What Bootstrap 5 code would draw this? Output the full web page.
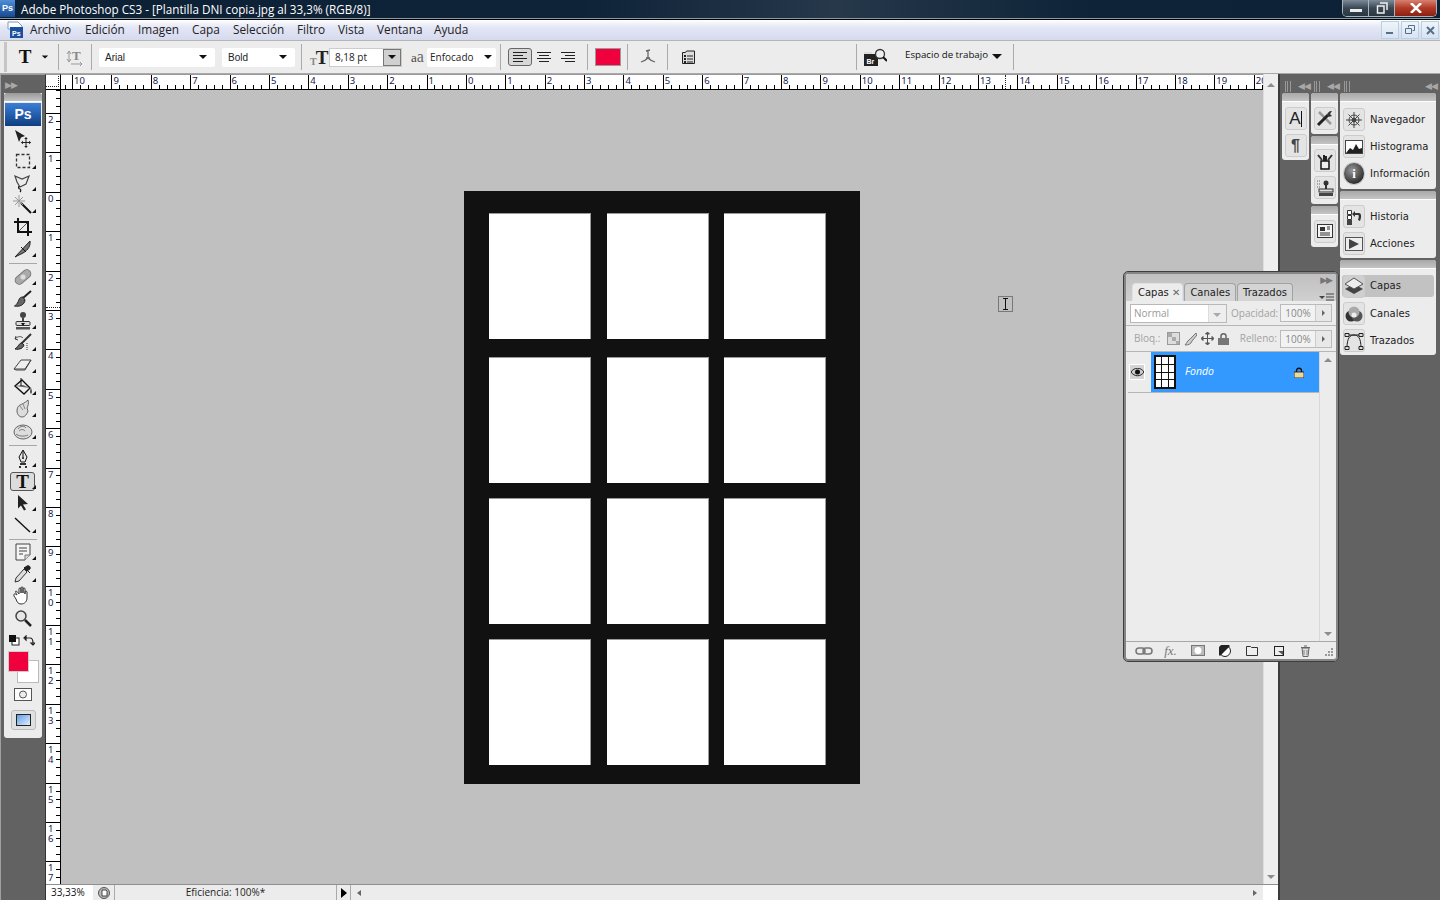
<!DOCTYPE html>
<html lang="es">
<head>
<meta charset="UTF-8">
<title>Adobe Photoshop CS3</title>
<link rel="stylesheet" href="https://cdn.jsdelivr.net/npm/bootstrap@5.3.0/dist/css/bootstrap.min.css">
<style>
html,body{height:900px;overflow:hidden}
body{width:1440px;background:#626262;font-family:"Open Sans","Noto Sans",sans-serif;font-size:12px;color:#222}
svg{display:block;flex:none}

/* title + menu */
.ps-title{height:19px;flex:none;color:#fff;font-size:11.7px;line-height:19px;border-bottom:1px solid #8b99a5;background:linear-gradient(to right,#0c2036,#0e2238 40%,#26384a 58%,#0e2338 76%,#0c2036)}
.ps-logo-sm{width:15px;height:17px;background:linear-gradient(#4f8ed8,#174a94);font:700 9px/17px "Liberation Sans",sans-serif;text-align:center;margin-right:6px}
.win-btns{height:17px;border:1px solid #aab4bd;border-top:0;border-radius:0 0 5px 5px;margin-right:3px;overflow:hidden}
.win-btn{width:26px;height:16px;border-right:1px solid #aab4bd;background:linear-gradient(#7d8b98,#3a4754 50%,#2a3641)}
.win-close{width:41px;border:0;background:linear-gradient(#d88070,#b03a26 50%,#8c2012)}
.ps-menu{height:22px;flex:none;border-top:1px solid #000;border-bottom:1px solid #b4b4b4;background:linear-gradient(#fff,#e4e7f5 35%,#d6daee)}
.ps-menu .nav-link{padding:0;color:#222;font-size:11.8px;line-height:19px;position:absolute;top:0}
.mdi-row{gap:2px;margin-right:1px}
.mdi-btn{width:18px;height:18px;border:1px solid #b8d0e2;background:linear-gradient(#eef4fa,#d8e4f2)}

/* options */
.ps-opts{height:33px;flex:none;background:#ececec;border-bottom:1px solid #a8a8a8;font-size:10px}
.opt-grip{width:3px;height:30px;background:#c6c6c6;margin:0 5px 0 4px}
.opt-sep{width:1px;height:26px;background:#aaa;flex:none}
.opt-select{height:19px;background:#fff;border-radius:2px;padding-left:6px;color:#222;font-family:"Liberation Sans",sans-serif;flex:none}
.tri-down{width:0;height:0;border:4px solid transparent;border-top:4px solid #111;border-bottom:0;flex:none}

/* work area */
.ps-work{flex:1 1 auto;min-height:0;position:relative}
.tool-col{width:46px;flex:none;padding:18px 0 0 3px;background:#626262;border-top:1px solid #9a9a9a;border-right:1px solid #333;border-left:1px solid #a0a0a0;position:relative}
.arrows{color:#a8a8a8;font-size:9px;letter-spacing:-1px;line-height:9px;position:absolute;font-family:"DejaVu Sans",sans-serif}
.tool-box{width:38px;height:645px;background:#ececec;border-radius:0 0 3px 3px}
.box-head{height:9px;background:linear-gradient(#999,#c2c2c2);border-bottom:1px solid #fff;border-radius:3px 3px 0 0}
.ps-big{margin:1px 1px 2px;height:23px;color:#fff;text-align:center;font:700 14px/23px "Liberation Sans",sans-serif;background:linear-gradient(#3b7fd8,#0f3d80)}
.tool-i{height:22px;position:relative;padding-right:1px}
.tool-i.flyout::after{content:"";position:absolute;right:6px;bottom:3px;border:2px solid #111;border-left-color:transparent;border-top-color:transparent}
.tool-on .tool-inner{width:25px;height:19px;border:1px solid #555;border-radius:3px;background:#dcdcdc}
.serif-t{font:700 19px/18px "Liberation Serif",serif;color:#111;text-align:center}
.tool-line{height:1px;background:#a8a8a8;margin:3px 5px 2px}
.swatches{height:37px;position:relative}
.sw-bg{position:absolute;left:13px;top:9px;width:22px;height:23px;background:#fff;border:1px solid #bbb}
.sw-fg{position:absolute;left:4px;top:0;width:21px;height:21px;background:#f0003c;border:1px solid #ccc}

.ps-center{flex:1 1 auto;min-width:0}
.hruler{height:16px;background:#fff;border-top:1px solid #9a9a9a;border-bottom:1px solid #000;overflow:hidden;position:relative;flex:1 1 auto;min-width:0;display:flex}
.ruler-corner{width:15px;height:16px;flex:none;background:#fff;border-top:1px solid #9a9a9a;border-bottom:1px solid #000;border-right:1px solid #000;position:relative}
.r-x{flex:none;width:39.4px;height:100%;border-left:1px solid #000;font:9.5px/12px "Noto Sans",sans-serif;color:#14204e;padding-left:1px;background:repeating-linear-gradient(to right,#000 0 1px,transparent 1px 7.88px) 6.9px 100%/100% 4px no-repeat}
.vruler{width:15px;flex:none;background:#fff;border-right:1px solid #000;overflow:hidden;position:relative}
.r-y{height:39.4px;border-top:1px solid #000;font:9.5px/10px "Noto Sans",sans-serif;color:#14204e;padding:1px 0 0 2px;background:repeating-linear-gradient(to bottom,#000 0 1px,transparent 1px 7.88px) 100% 6.9px/4px 100% no-repeat}
.ps-canvas{flex:1 1 auto;min-width:0;background:#c0c0c0}
.doc{width:396px;height:593px;background:#111;padding:22px 0 0 25px;display:grid;grid-template-columns:102px 102px 102px;column-gap:15.5px;row-gap:15px;align-content:start}
.doc-cell{background:#fff;box-shadow:inset -1px 1px 0 #9a9a9a}
.doc-first{margin-bottom:3px}
.vscroll{width:15px;flex:none;background:#eee;border-left:1px solid #ddd;color:#888}
.scroll-up{width:0;height:0;border:4px solid transparent;border-bottom:4px solid #8c8c8c;border-top:0}
.scroll-down{width:0;height:0;border:4px solid transparent;border-top:4px solid #8c8c8c;border-bottom:0}
.ps-status{height:16px;flex:none;background:#ececec;border-top:1px solid #8f8f8f;font-size:10px;line-height:15px}
.st-zoom{width:47px;background:#fff;padding-left:5px;color:#111}
.st-sep{border-right:1px solid #aaa}
.st-end{width:15px;background:#fff}

/* dock */
.ps-dock{width:162px;flex:none;background:#626262;border-left:2px solid #3c3c3c;padding:0 0 0 2px;position:relative}
.dock-strip{height:19px;flex:none}
.grip{width:6px;height:11px;border-left:1px solid #999;border-right:1px solid #999;position:absolute;top:7px}
.grip::after{content:"";display:block;margin-left:1px;width:1px;height:11px;background:#999}
.dock-cols{column-gap:2px}
.dock-col{width:27px}
.dock-col-wide{width:96px}
.dock-grp{background:#ececec;border-radius:3px;margin-bottom:2px}
.dock-head{height:9px;background:linear-gradient(#a8a8a8,#c4c4c4);border-bottom:1px solid #fff;border-radius:3px 3px 0 0}
.icon-cell{height:27px}
.icon-tall{height:32px}
.icon-btn{width:22px;height:23px;border:1px solid #ccc;border-radius:3px;background:#e4e4e4;color:#222;flex:none}
.dock-row{height:27px;margin:0 2px;padding-left:1px;font:10px/1 "DejaVu Sans",sans-serif;color:#222;letter-spacing:.05px}
.dock-row .icon-btn{margin-right:5px}
.dock-on{background:#c2c2c2;border-radius:3px;height:22px;margin-top:2px;margin-bottom:3px}

/* floating layers window */
.layers-win{position:absolute;left:1123px;top:197px;width:216px;height:391px;background:#ececec;border:1px solid #3e3e3e;box-shadow:inset 0 0 0 2px #858585;border-radius:5px;padding:2px;font-size:10px}
.win-head{height:27px;flex:none;background:linear-gradient(#c0c0c0,#d0d0d0);position:relative;padding:9px 0 0 6px;border-radius:3px 3px 0 0}
.win-head .arrows{color:#777}
.win-head .nav-tabs{border:0;gap:1px;flex-wrap:nowrap}
.win-head .nav-link{height:18px;padding:0 5px;font:10px/18px "DejaVu Sans",sans-serif;color:#222;background:#d4d4d4;border:1px solid #a2a2a2;border-bottom:0;border-radius:4px 4px 0 0;white-space:nowrap}
.win-head .nav-link.active{background:#ececec;color:#222;padding-right:2px}
.win-row{height:25px;flex:none;border-bottom:1px solid #b6b6b6;color:#a2a2a2;padding:0 4px}
.win-row-b{height:26px}
.win-input{height:19px;background:#fff;border:1px solid #b8b8b8;color:#999;padding-left:3px}
.win-field{width:52px;height:18px;border:1px solid #bbb;background:#e8e8e8}
.win-field span{width:35px;text-align:center;background:#f2f2f2;border-right:1px solid #ccc;line-height:16px;color:#888}
.mini-arrow{width:0;height:0;border:3px solid transparent;border-left:3px solid #666;border-right:0;margin:auto}
.layer-list{flex:1 1 auto;min-height:0;border-bottom:1px solid #a8a8a8}
.layer-col{width:194px;padding-left:2px;border-right:1px solid #d8d8d8}
.layer-item{height:41px;border-bottom:1px solid #b6b6b6}
.eye-cell{width:23px;flex:none}
.eye-box{width:16px;height:16px;border:1px solid #fff;background:#d4d4d4;margin-left:1px}
.layer-on{background:#3399ff;flex:1 1 auto;color:#fff;font-style:italic;font-size:10.5px;padding-left:3px}
.layer-thumb{width:22px;height:34px;background:#111;padding:2px 2px;display:grid;grid-template-columns:repeat(3,1fr);gap:1px;margin-right:9px}
.layer-thumb i{background:#fff}
.layer-scroll{width:16px;flex:none;padding:6px 0 5px}
.win-foot{height:17px;flex:none;padding-left:4px}
.foot-i{width:27px}
.fx-t{font:italic 13px/1 "Liberation Serif",serif;color:#777}
.txt-cursor{position:absolute;left:998px;top:222px}
</style>
</head>
<body class="d-flex flex-column">

<div class="ps-title d-flex align-items-start">
  <div class="ps-logo-sm">Ps</div>
  <div class="flex-grow-1">Adobe Photoshop CS3 - [Plantilla DNI copia.jpg al 33,3% (RGB/8)]</div>
  <div class="win-btns d-flex">
    <div class="win-btn d-flex align-items-end justify-content-center pb-1"><svg width="12" height="3"><rect width="12" height="3" fill="#eee"/></svg></div>
    <div class="win-btn d-flex align-items-center justify-content-center"><svg width="12" height="12" fill="none" stroke="#eee" stroke-width="1.5"><path d="M4 1h7v7M1.500 4h6.500v7h-6.500z"/></svg></div>
    <div class="win-btn win-close d-flex align-items-center justify-content-center"><svg width="12" height="10" stroke="#fff" stroke-width="2.500"><path d="M1 0l10 10M11 0L1 10"/></svg></div>
  </div>
</div>

<div class="ps-menu d-flex position-relative">
  <svg class="position-absolute" style="left:7px;top:1px" width="17" height="18"><path d="M1 1h10l4 4v3H1z" fill="#fff" stroke="#7d9cc4"/><rect x="3" y="6" width="13" height="11" fill="#1c4f9c"/><text x="5" y="15" font-size="7" font-weight="700" fill="#fff" font-family="Liberation Sans">Ps</text></svg>
  <nav class="nav">
    <a class="nav-link" style="left:30px">Archivo</a>
    <a class="nav-link" style="left:85px">Edición</a>
    <a class="nav-link" style="left:138px">Imagen</a>
    <a class="nav-link" style="left:192px">Capa</a>
    <a class="nav-link" style="left:233px">Selección</a>
    <a class="nav-link" style="left:297px">Filtro</a>
    <a class="nav-link" style="left:338px">Vista</a>
    <a class="nav-link" style="left:377px">Ventana</a>
    <a class="nav-link" style="left:434px">Ayuda</a>
  </nav>
  <div class="ms-auto d-flex mdi-row align-items-center">
    <div class="mdi-btn d-flex align-items-center justify-content-center"><svg width="8" height="8"><rect y="6" width="7" height="2" fill="#56708c"/></svg></div>
    <div class="mdi-btn d-flex align-items-center justify-content-center"><svg width="10" height="10" fill="none" stroke="#56708c"><path d="M3.500 2.500V.5h6v5h-2M.5 3.500h6v5h-6z"/></svg></div>
    <div class="mdi-btn d-flex align-items-center justify-content-center"><svg width="9" height="9" stroke="#56708c" stroke-width="2"><path d="M1 1l7 7M8 1L1 8"/></svg></div>
  </div>
</div>

<div class="ps-opts d-flex align-items-center">
  <div class="opt-grip"></div>
  <div class="serif-t" style="width:26px">T</div>
  <div class="tri-down" style="margin-left:3px;transform:scale(.8)"></div>
  <div class="opt-sep" style="margin-left:9px"></div>
  <svg style="margin-left:7px" width="18" height="18"><path d="M3 3v11M1 6l2-3 2 3M1 11l2 3 2-3M5 16h11M14 14l2 2-2 2" fill="none" stroke="#999"/><text x="6" y="12" font-size="13" font-weight="700" fill="#888" font-family="Liberation Serif">T</text></svg>
  <div class="opt-sep" style="margin-left:7px"></div>
  <div class="opt-select d-flex align-items-center" style="width:116px;margin-left:7px">Arial<span class="tri-down ms-auto me-2"></span></div>
  <div class="opt-select d-flex align-items-center" style="width:73px;margin-left:7px">Bold<span class="tri-down ms-auto me-2"></span></div>
  <div class="opt-sep" style="margin-left:6px"></div>
  <div class="d-flex align-items-end" style="margin-left:8px;width:18px;font:700 10px/1 'Liberation Serif',serif;color:#888">T<span style="font-size:19px;line-height:19px;color:#222;margin-left:-1px">T</span></div>
  <div class="d-flex align-items-center flex-none" style="width:73px;height:19px;margin-left:1px;background:#fff;border:1px solid #ccc;padding-left:5px">8,18 pt<span class="ms-auto d-flex align-items-center justify-content-center" style="width:18px;height:17px;background:#d0d0d0;border:1px solid #777"><i class="tri-down"></i></span></div>
  <div style="margin-left:9px;width:16px;font:13px/1 'Liberation Serif',serif;color:#444">a<span style="font-size:16px;color:#666">a</span></div>
  <div class="opt-select d-flex align-items-center" style="width:69px;padding-left:3px;font-family:'Open Sans',sans-serif">Enfocado<span class="tri-down ms-auto me-1"></span></div>
  <div class="opt-sep" style="margin-left:4px"></div>
  <div class="d-flex align-items-center justify-content-center" style="width:24px;height:18px;margin-left:7px;background:#d8d8d8;border:1px solid #666;border-radius:3px"><svg width="16" height="13" stroke="#222"><path d="M1 1.500h14M1 4.500h10M1 7.500h14M1 10.500h10"/></svg></div>
  <svg style="margin-left:4px" width="16" height="13" stroke="#222"><path d="M1 1.500h14M3 4.500h10M1 7.500h14M3 10.500h10"/></svg>
  <svg style="margin-left:8px" width="16" height="13" stroke="#222"><path d="M1 1.500h14M5 4.500h10M1 7.500h14M5 10.500h10"/></svg>
  <div class="opt-sep" style="margin-left:11px"></div>
  <div style="width:26px;height:18px;margin-left:7px;background:#f0003c;border:1px solid #999"></div>
  <div class="opt-sep" style="margin-left:6px"></div>
  <svg style="margin-left:12px" width="16" height="18" fill="none" stroke="#666" stroke-width="1.300"><path d="M6 3l4-1M8 2v8M6 10h4M8 10c-2 2-4 3-7 4M8 10c2 2 4 3 7 4"/></svg>
  <div class="opt-sep" style="margin-left:11px"></div>
  <svg style="margin-left:13px" width="15" height="15"><path d="M1.500 2.500h3l1-1.500h8v12.500h-12z" fill="#ddd" stroke="#222"/><path d="M3 5h2v2H3zM3 8h2v2H3zM3 11h2v2H3z" fill="#222"/><path d="M6 6h6M6 9h6M6 12h6" stroke="#222"/></svg>
  <div class="opt-sep" style="margin-left:160px"></div>
  <svg style="margin-left:6px" width="24" height="18"><path d="M1 5h5l1 1h8v12H1z" fill="#222"/><rect x="1" y="4" width="8" height="2" fill="#ddd"/><circle cx="17" cy="6" r="4.500" fill="#eee" stroke="#333" stroke-width="1.300"/><path d="M20 9l4 4" stroke="#111" stroke-width="2"/><text x="3.500" y="15.500" font-size="7" font-weight="700" fill="#fff" font-family="Liberation Sans">Br</text></svg>
  <div style="margin-left:18px;margin-top:-3px;color:#111;font-size:9.7px" class="text-nowrap">Espacio de trabajo</div>
  <div class="tri-down" style="margin:-2px 0 0 4px;border-width:5px;border-bottom:0"></div>
  <div class="opt-sep" style="margin-left:11px"></div>
</div>

<div class="ps-work d-flex">
  <div class="tool-col">
    <div class="arrows" style="left:4px;top:6px">▶▶</div>
    <div class="tool-box">
      <div class="box-head"></div>
      <div class="ps-big">Ps</div>
      <div class="tool-i d-flex align-items-center justify-content-center"><svg width="20" height="20"><path d="M2 1l10 6-4 1.500-2 4.500z" fill="#222"/><path d="M13 9v9M8.500 13.500h9" stroke="#222" fill="none"/><path d="M13 8l-1.800 2h3.600zM13 19l-1.800-2h3.600zM8 13.500l2-1.800v3.600zM18 13.500l-2-1.800v3.600z" fill="#222"/></svg></div>
      <div class="tool-i flyout d-flex align-items-center justify-content-center"><svg width="20" height="20"><rect x="3.500" y="3.500" width="13" height="13" fill="none" stroke="#333" stroke-width="1.300" stroke-dasharray="3 2"/></svg></div>
      <div class="tool-i flyout d-flex align-items-center justify-content-center"><svg width="20" height="20" fill="none" stroke="#444" stroke-width="1.200"><path d="M2 3l7 3 7-3-3 8-6 3-3-5z"/><path d="M6 13c-1 2 0 3 1 3s1 2 0 3" stroke="#111"/></svg></div>
      <div class="tool-i d-flex align-items-center justify-content-center flyout"><svg width="20" height="20"><path d="M8 8l10 10" stroke="#111" stroke-width="2"/><path d="M6 0v12M0 6h12M2 2l8 8M10 2l-8 8" stroke="#999"/></svg></div>
      <div class="tool-i d-flex align-items-center justify-content-center"><svg width="20" height="20" fill="none"><path d="M5 1v14h14M1 5h14v14" stroke="#111" stroke-width="2"/><path d="M6 14l8-8" stroke="#555"/></svg></div>
      <div class="tool-i flyout d-flex align-items-center justify-content-center"><svg width="20" height="20"><path d="M2 18L17 2c1 6-4 11-9 13z" fill="#777" stroke="#222"/><path d="M8 8l5 5" stroke="#111"/></svg></div>
      <div class="tool-line"></div>
      <div class="tool-i flyout d-flex align-items-center justify-content-center"><svg width="20" height="20"><rect x="1" y="6" width="18" height="8" rx="4" fill="#aaa" stroke="#777" transform="rotate(-40 10 10)"/><circle cx="10" cy="10" r="2.500" fill="#ddd"/></svg></div>
      <div class="tool-i flyout d-flex align-items-center justify-content-center"><svg width="20" height="20"><path d="M18 2l-8 7" stroke="#222" stroke-width="2"/><path d="M10 8c-4 0-4 3-5 5-.5 1.500-2 3-3.500 4 5 1 10-1 10.500-6z" fill="#666" stroke="#222"/></svg></div>
      <div class="tool-i flyout d-flex align-items-center justify-content-center"><svg width="20" height="20"><circle cx="10" cy="4" r="3" fill="#444"/><path d="M9 7h2v4H9z" fill="#444"/><rect x="3" y="10.500" width="14" height="4" rx="1" fill="#ddd" stroke="#333"/><path d="M3 16h14v2.500H3z" fill="#555"/><path d="M8 12h4l-2 3z" fill="#111"/></svg></div>
      <div class="tool-i flyout d-flex align-items-center justify-content-center"><svg width="20" height="20" fill="none"><path d="M18 1L8 11" stroke="#333" stroke-width="2"/><path d="M9 10c-3 0-3 3-7 6 5 1 8-1 9-4z" fill="#666" stroke="#222"/><path d="M2 6c3-3 6-3 8-1M2 6l1-3M2 6l3 1" stroke="#444"/><path d="M14 10v8" stroke="#333" stroke-dasharray="1 1"/></svg></div>
      <div class="tool-i flyout d-flex align-items-center justify-content-center"><svg width="20" height="20"><path d="M1 14l7-9h10l-6 10H3z" fill="#eee" stroke="#444"/><path d="M1 14h11l6-9" fill="none" stroke="#444"/></svg></div>
      <div class="tool-i flyout d-flex align-items-center justify-content-center"><svg width="20" height="20"><path d="M9 3l8 8-6 6-9-8z" fill="#eee" stroke="#111" stroke-width="1.400"/><path d="M2 9l8-1 7 3" fill="#666"/><path d="M8 1v8" stroke="#111"/><path d="M18 11c1 2 1 5 0 6-1-1-1-4 0-6z" fill="#222"/></svg></div>
      <div class="tool-i flyout d-flex align-items-center justify-content-center"><svg width="20" height="20"><path d="M15 1c-3 3-6 4-8 5-2 1-3 3-3 6 0 3 2 6 5 6s5-3 6-6l-1-3c1-2 2-5 1-8z" fill="#ddd" stroke="#666"/><path d="M7 7l3 4M10 5l2 5" stroke="#888"/></svg></div>
      <div class="tool-i flyout d-flex align-items-center justify-content-center"><svg width="20" height="20"><ellipse cx="10" cy="11" rx="9" ry="7" fill="#ddd" stroke="#666"/><path d="M3 13c2 2 8 3 12 1M5 8c2-3 6-4 8-1M6 10c2-2 4-2 6 0" fill="none" stroke="#777"/></svg></div>
      <div class="tool-line"></div>
      <div class="tool-i flyout d-flex align-items-center justify-content-center"><svg width="20" height="20"><path d="M10 1l4 7-2 5H8L6 8z" fill="#e8e8e8" stroke="#111"/><path d="M10 2v6" stroke="#111"/><circle cx="10" cy="9" r="1" fill="#111"/><path d="M7 14h6v2H7zM6 17h2v2H6zM12 17h2v2h-2z" fill="#333"/></svg></div>
      <div class="tool-i tool-on flyout d-flex align-items-center justify-content-center"><div class="tool-inner serif-t">T</div></div>
      <div class="tool-i flyout d-flex align-items-center justify-content-center"><svg width="20" height="20"><path d="M5 2l10 9-5 .5 3 5-2 1-3-5-3 3z" fill="#222"/></svg></div>
      <div class="tool-i flyout d-flex align-items-center justify-content-center"><svg width="20" height="20"><path d="M2 3l15 14" stroke="#111" stroke-width="1.400"/></svg></div>
      <div class="tool-line" style="margin-bottom:1px"></div>
      <div class="tool-i flyout d-flex align-items-center justify-content-center"><svg width="20" height="20"><path d="M3 2h14v11l-5 5H3z" fill="#f4f4f4" stroke="#444"/><path d="M12 18v-5h5" fill="#ddd" stroke="#777"/><path d="M6 6h8M6 9h8M6 12h4" stroke="#444"/></svg></div>
      <div class="tool-i flyout d-flex align-items-center justify-content-center"><svg width="20" height="20"><path d="M11 5l-8 9-1 4 4-1 8-9z" fill="#ddd" stroke="#333"/><path d="M11 3l6 6M14 2c2-1 4 1 3 3l-3 2-3-3z" fill="#222" stroke="#222"/></svg></div>
      <div class="tool-i d-flex align-items-center justify-content-center"><svg width="20" height="20"><path d="M4 9c-1-2-2-4-1-4s2 2 3 3V3c0-1.500 2-1.500 2 0v4-5c0-1.500 2-1.500 2 0v5-4c0-1.500 2-1.500 2 0v5-2c0-1.500 2-1 2 0v6c0 3-2 6-6 6-3 0-4-2-5-5l-2-3c-1-2 1-3 3-1z" fill="#fff" stroke="#333"/></svg></div>
      <div class="tool-i d-flex align-items-center justify-content-center"><svg width="20" height="20"><circle cx="8" cy="8" r="5" fill="#e6e6e6" stroke="#444" stroke-width="1.500"/><path d="M12 12l6 6" stroke="#222" stroke-width="2.500"/></svg></div>
      <div class="tool-i d-flex align-items-center justify-content-between" style="padding:0 7px 0 5px"><svg width="11" height="11"><rect x="3" y="3" width="7" height="7" fill="#fff" stroke="#222"/><rect x="0" y="0" width="7" height="7" fill="#111"/></svg><svg width="12" height="11" fill="none" stroke="#222" stroke-width="1.200"><path d="M2 3h5c2 0 3 1 3 5M1 3l2-2v4zM10 10l-2-2h4z"/></svg></div>
      <div class="swatches"><div class="sw-bg"></div><div class="sw-fg"></div></div>
      <div class="d-flex justify-content-center" style="margin-bottom:9px"><svg width="18" height="13"><rect x=".5" y=".5" width="17" height="12" fill="#fff" stroke="#555"/><circle cx="9" cy="6.500" r="3.500" fill="#eee" stroke="#555"/></svg></div>
      <div class="d-flex justify-content-center position-relative"><div class="d-flex align-items-center justify-content-center" style="width:25px;height:20px;border:1px solid #bbb;border-radius:3px;background:#e0e0e0"><svg width="15" height="12"><defs><linearGradient id="sm" x1="0" y1="0" x2="1" y2="1"><stop offset="0" stop-color="#5a9ae6"/><stop offset="1" stop-color="#e8f2fc"/></linearGradient></defs><rect x=".5" y=".5" width="14" height="11" fill="url(#sm)" stroke="#222"/></svg></div></div>
    </div>
  </div>

  <div class="ps-center d-flex flex-column">
    <div class="d-flex flex-grow-1" style="min-height:0">
      <div class="d-flex flex-column flex-grow-1" style="min-width:0">
        <div class="d-flex flex-none">
          <div class="ruler-corner"><svg class="position-absolute" style="left:0;top:0" width="14" height="14" stroke="#222" stroke-dasharray="1 1"><path d="M0 11.500h12M12.500 1v11"/></svg></div>
          <div class="hruler" id="hruler"></div>
        </div>
        <div class="d-flex flex-grow-1" style="min-height:0">
          <div class="vruler" id="vruler"></div>
          <div class="ps-canvas d-flex align-items-center justify-content-center">
            <div class="doc" id="doc"></div>
          </div>
        </div>
      </div>
      <div class="vscroll d-flex flex-column align-items-center justify-content-between" style="padding:9px 0 5px"><div class="scroll-up"></div><div class="scroll-down"></div></div>
    </div>
    <div class="ps-status d-flex">
      <div class="st-zoom">33,33%</div>
      <div class="d-flex align-items-center justify-content-center st-sep" style="width:22px"><svg width="12" height="12"><circle cx="6" cy="6" r="5.500" fill="#bbb" stroke="#555"/><path d="M4 3h4l1 1v5H4z" fill="#fff" stroke="#222" stroke-width=".8"/></svg></div>
      <div class="text-center st-sep" style="width:222px">Eficiencia: 100%*</div>
      <div class="d-flex align-items-center justify-content-center st-sep" style="width:14px"><svg width="6" height="10"><path d="M0 0l6 5-6 5z" fill="#000"/></svg></div>
      <div class="d-flex align-items-center justify-content-between flex-grow-1" style="padding:0 6px"><span class="mini-arrow" style="margin:0;transform:scaleX(-1);border-left-width:4px"></span><span class="mini-arrow" style="margin:0;border-left-width:4px"></span></div>
      <div class="st-end"></div>
    </div>
  </div>

  <div class="ps-dock d-flex flex-column">
    <div class="dock-strip">
      <div class="grip" style="left:5px"></div><div class="arrows" style="left:18px;top:8px">◀◀</div>
      <div class="grip" style="left:34px"></div><div class="arrows" style="left:47px;top:8px">◀◀</div>
      <div class="grip" style="left:64px"></div><div class="arrows" style="left:145px;top:8px">◀◀</div>
    </div>
    <div class="d-flex dock-cols">
      <div class="dock-col">
        <div class="dock-grp" style="padding:3px 0 1px">
          <div class="dock-head" style="margin-top:-3px;margin-bottom:3px"></div>
          <div class="icon-cell d-flex align-items-center justify-content-center"><div class="icon-btn d-flex align-items-center justify-content-center" style="font:17px/1 'Liberation Sans',sans-serif">A<svg width="1" height="16"><rect width="1" height="16" fill="#111"/></svg></div></div>
          <div class="icon-cell d-flex align-items-center justify-content-center"><div class="icon-btn d-flex align-items-center justify-content-center" style="font:700 16px/1 'Liberation Sans',sans-serif;color:#444">¶</div></div>
        </div>
      </div>
      <div class="dock-col">
        <div class="dock-grp">
          <div class="dock-head"></div>
          <div class="icon-cell icon-tall d-flex align-items-center justify-content-center"><div class="icon-btn d-flex align-items-center justify-content-center"><svg width="18" height="18"><path d="M3 3l12 12" stroke="#999" stroke-width="2.500"/><path d="M2 16L12 6" stroke="#222" stroke-width="3"/><path d="M11 7c0-3 2-5 5-5l-2 3 2 2c-2 1-4 1-5 0z" fill="#333"/></svg></div></div>
        </div>
        <div class="dock-grp" style="padding-bottom:3px">
          <div class="dock-head" style="margin-bottom:2px"></div>
          <div class="icon-cell d-flex align-items-center justify-content-center"><div class="icon-btn d-flex align-items-center justify-content-center"><svg width="18" height="18"><path d="M5 9h8v8H5z" fill="#eee" stroke="#111" stroke-width="1.500"/><path d="M8 9V3M10 9V4" stroke="#222" stroke-width="2"/><path d="M6 8L2 3M12 8l4-5" stroke="#333" stroke-width="2"/></svg></div></div>
          <div class="icon-cell d-flex align-items-center justify-content-center"><div class="icon-btn d-flex align-items-center justify-content-center"><svg width="18" height="18"><circle cx="10" cy="4" r="2.500" fill="#333"/><path d="M9 6h2v4H9z" fill="#333"/><rect x="3" y="10" width="14" height="3" fill="#ddd" stroke="#333"/><path d="M3 14h14v3H3z" fill="#444"/><path d="M1 2h4M1 5h4M1 8h4" stroke="#666" stroke-dasharray="1 1"/></svg></div></div>
        </div>
        <div class="dock-grp">
          <div class="dock-head"></div>
          <div class="icon-cell icon-tall d-flex align-items-center justify-content-center"><div class="icon-btn d-flex align-items-center justify-content-center"><svg width="16" height="14"><rect x=".5" y=".5" width="15" height="13" fill="#f4f4f4" stroke="#333"/><path d="M3 3h5v4H3z" fill="#333"/><path d="M3 9h10M3 11h10M10 3h3M10 5h3" stroke="#333"/></svg></div></div>
        </div>
      </div>
      <div class="dock-col-wide">
        <div class="dock-grp" style="padding-bottom:2px">
          <div class="dock-head" style="margin-bottom:4px"></div>
          <div class="dock-row d-flex align-items-center"><div class="icon-btn d-flex align-items-center justify-content-center"><svg width="18" height="18" fill="none" stroke="#444"><circle cx="9" cy="9" r="5"/><circle cx="9" cy="9" r="2" fill="#444"/><path d="M9 1v16M1 9h16M3.500 3.500l11 11M14.500 3.500l-11 11"/></svg></div>Navegador</div>
          <div class="dock-row d-flex align-items-center"><div class="icon-btn d-flex align-items-center justify-content-center"><svg width="18" height="14"><rect x=".5" y=".5" width="17" height="13" fill="#fff" stroke="#444"/><path d="M1 13l4-5 3 2 3-6 3 5 3-1v5z" fill="#222"/></svg></div>Histograma</div>
          <div class="dock-row d-flex align-items-center"><div class="icon-btn d-flex align-items-center justify-content-center" style="background:radial-gradient(circle at 40% 35%,#999 0,#333 70%);border-radius:50%;color:#fff;font:700 13px/1 'Liberation Serif',serif">i</div>Información</div>
        </div>
        <div class="dock-grp" style="padding-bottom:1px">
          <div class="dock-head" style="margin-bottom:3px"></div>
          <div class="dock-row d-flex align-items-center"><div class="icon-btn d-flex align-items-center justify-content-center"><svg width="16" height="16"><path d="M1.500 1.500h4v4h-4zM1.500 6.500h4v4h-4z" fill="#fff" stroke="#333"/><path d="M1 11h5v5H1z" fill="#444"/><path d="M8 4h4c2 0 3 3 1 8l-2-1c1-3 1-5 0-5H8v2L5 5l3-3z" fill="#333" transform="translate(1)"/></svg></div>Historia</div>
          <div class="dock-row d-flex align-items-center"><div class="icon-btn d-flex align-items-center justify-content-center"><svg width="18" height="14"><rect x=".5" y=".5" width="17" height="13" fill="#eee" stroke="#555"/><path d="M4 2l10 5-10 5z" fill="#444"/></svg></div>Acciones</div>
        </div>
        <div class="dock-grp" style="padding-bottom:1px">
          <div class="dock-head" style="margin-bottom:6px"></div>
          <div class="dock-row dock-on d-flex align-items-center"><div class="icon-btn d-flex align-items-center justify-content-center" style="background:#cfcfcf"><svg width="20" height="18"><path d="M10 7l9 5-9 5-9-5z" fill="#444"/><path d="M10 1l9 6-9 5-9-5z" fill="#eee" stroke="#555"/></svg></div>Capas</div>
          <div class="dock-row d-flex align-items-center"><div class="icon-btn d-flex align-items-center justify-content-center"><svg width="18" height="16"><circle cx="6" cy="10" r="5.500" fill="#333"/><circle cx="12" cy="10" r="5.500" fill="#555"/><circle cx="9" cy="6" r="5.500" fill="#aaa"/><circle cx="9" cy="9" r="2.500" fill="#eee"/></svg></div>Canales</div>
          <div class="dock-row d-flex align-items-center"><div class="icon-btn d-flex align-items-center justify-content-center"><svg width="20" height="18" fill="none" stroke="#222"><path d="M3 16C3 6 6 3 10 3s7 3 7 13"/><path d="M1 1.500h4v3H1zM15 1.500h4v3h-4zM1 14.500h4v3H1zM15 14.500h4v3h-4z" fill="#ddd"/><path d="M5 3h10"/></svg></div>Trazados</div>
        </div>
      </div>
    </div>
  </div>

  <svg class="txt-cursor" width="15" height="16" fill="none" stroke="#333"><rect x=".5" y=".5" width="14" height="15" stroke-dasharray="1 1"/><path d="M5 2.500h5M7.500 2.500v11M5 13.500h5" stroke="#111"/></svg>

  <div class="layers-win d-flex flex-column">
    <div class="win-head">
      <div class="arrows" style="right:4px;top:2px">▶▶</div>
      <ul class="nav nav-tabs">
        <li class="nav-item"><a class="nav-link active">Capas <span style="color:#666">✕</span></a></li>
        <li class="nav-item"><a class="nav-link">Canales</a></li>
        <li class="nav-item"><a class="nav-link">Trazados</a></li>
      </ul>
      <svg class="position-absolute" style="right:2px;top:19px" width="15" height="8"><path d="M0 3h6L3 6z" fill="#444"/><path d="M7 1h8M7 4h8M7 7h8" stroke="#444"/></svg>
    </div>
    <div class="win-row d-flex align-items-center">
      <div class="win-input d-flex align-items-center" style="width:97px">Normal<span class="ms-auto" style="width:18px;height:17px;border-left:1px solid #ddd;background:#eee"><svg width="16" height="17"><path d="M4 8h8l-4 4z" fill="#aaa"/></svg></span></div>
      <span style="margin-left:4px;width:49px">Opacidad:</span>
      <div class="win-field d-flex"><span>100%</span><i class="mini-arrow"></i></div>
    </div>
    <div class="win-row win-row-b d-flex align-items-center">
      <span style="margin-left:4px;width:33px">Bloq.:</span>
      <div class="d-flex align-items-center gap-1">
        <svg width="13" height="13"><rect x=".5" y=".5" width="12" height="12" fill="#ddd" stroke="#999"/><path d="M1 1h4v4H1zM5 5h4v4H5zM9 9h3v3H9z" fill="#aaa"/></svg>
        <svg width="13" height="14"><path d="M12 1L5 8c-2 1-2 3-4 5 4 0 6-1 7-4l5-6z" fill="#ccc" stroke="#777"/></svg>
        <svg width="13" height="13" stroke="#555"><path d="M6.500 1v11M1 6.500h11"/><path d="M6.500 0l-2 2h4zM6.500 13l-2-2h4zM0 6.500l2-2v4zM13 6.500l-2-2v4z" fill="#555"/></svg>
        <svg width="11" height="13"><path d="M3 6V4c0-3 5-3 5 0v2" fill="none" stroke="#666" stroke-width="1.500"/><rect y="6" width="11" height="7" fill="#777"/></svg>
      </div>
      <span class="text-end" style="margin-left:auto;margin-right:3px">Relleno:</span>
      <div class="win-field d-flex"><span>100%</span><i class="mini-arrow"></i></div>
    </div>
    <div class="layer-list d-flex">
      <div class="layer-col">
        <div class="layer-item d-flex">
          <div class="eye-cell d-flex align-items-center justify-content-start"><div class="eye-box d-flex align-items-center justify-content-center"><svg width="13" height="9"><path d="M0 4c3-5 10-5 13 0-3 5-10 5-13 0z" fill="#ccc" stroke="#222"/><circle cx="6.500" cy="4" r="2.500" fill="#111"/></svg></div></div>
          <div class="layer-on d-flex align-items-center">
            <div class="layer-thumb"><i></i><i></i><i></i><i></i><i></i><i></i><i></i><i></i><i></i><i></i><i></i><i></i></div>
            Fondo
            <svg class="ms-auto" style="margin-right:15px" width="10" height="11"><path d="M2.500 5V3.500c0-3 5-3 5 0V5" fill="none" stroke="#111" stroke-width="1.300"/><rect y="5" width="10" height="6" fill="#e8d9a0" stroke="#111" stroke-width=".8"/></svg>
          </div>
        </div>
      </div>
      <div class="layer-scroll d-flex flex-column align-items-center justify-content-between"><div class="scroll-up"></div><div class="scroll-down"></div></div>
    </div>
    <div class="win-foot d-flex align-items-center">
      <div class="foot-i d-flex justify-content-center"><svg width="18" height="8" fill="none" stroke="#777" stroke-width="1.500"><rect x="1" y="1" width="9" height="6" rx="3"/><rect x="8" y="1" width="9" height="6" rx="3"/></svg></div>
      <div class="foot-i text-center fx-t">fx.</div>
      <div class="foot-i d-flex justify-content-center"><svg width="14" height="11"><rect x=".5" y=".5" width="13" height="10" fill="#bbb" stroke="#777"/><circle cx="7" cy="5.500" r="3.500" fill="#fff"/></svg></div>
      <div class="foot-i d-flex justify-content-center"><svg width="12" height="12"><circle cx="6" cy="6" r="5.500" fill="#fff" stroke="#222"/><path d="M1 11A7 7 0 0 1 11 1z" fill="#222"/></svg></div>
      <div class="foot-i d-flex justify-content-center"><svg width="12" height="10"><path d="M.5 9.500v-9h4l1 1h6v8z" fill="#eee" stroke="#333"/></svg></div>
      <div class="foot-i d-flex justify-content-center"><svg width="10" height="10"><rect x=".5" y=".5" width="9" height="9" fill="#eee" stroke="#222"/><path d="M4 5h5v4" fill="#555"/></svg></div>
      <div class="foot-i d-flex justify-content-center"><svg width="11" height="12"><path d="M2 3h7l-1 8.500H3z" fill="#ddd" stroke="#666"/><path d="M1 2.500h9M4 1h3" stroke="#666"/><path d="M4 5v5M7 5v5" stroke="#888"/></svg></div>
      <svg class="ms-auto" style="margin:4px 3px 0 0" width="9" height="9" fill="#999"><path d="M7 0h2v2H7zM4 3h2v2H4zM7 3h2v2H7zM1 6h2v2H1zM4 6h2v2H4zM7 6h2v2H7z"/></svg>
    </div>
  </div>
</div>

<script>
  // rulers: 39.4px per cm, counted from the document edge
  let hruler = document.getElementById("hruler");
  let hLabels = ["", 10, 9, 8, 7, 6, 5, 4, 3, 2, 1, 0];
  for (let i = 1; i <= 20; i++) hLabels.push(i);
  hLabels.forEach((n, i) => {
    let cell = document.createElement("div");
    cell.className = "r-x";
    cell.textContent = n;
    if (i === 0) cell.style.marginLeft = "-28.4px";
    hruler.appendChild(cell);
  });
  let mark = document.createElement("div");
  mark.style.cssText = "position:absolute;left:944px;top:0;height:14px;border-left:1px dotted #222";
  hruler.appendChild(mark);

  let vruler = document.getElementById("vruler");
  let vLabels = ["", 2, 1, 0];
  for (let i = 1; i <= 17; i++) vLabels.push(i);
  vLabels.forEach((n, i) => {
    let cell = document.createElement("div");
    cell.className = "r-y";
    cell.innerHTML = String(n).split("").join("<br>");
    if (i === 0) cell.style.marginTop = "-16.4px";
    vruler.appendChild(cell);
  });
  let markY = document.createElement("div");
  markY.style.cssText = "position:absolute;left:0;top:217px;width:14px;border-top:1px dotted #222";
  vruler.appendChild(markY);

  let doc = document.getElementById("doc");
  for (let i = 0; i < 12; i++) {
    let cell = document.createElement("div");
    cell.className = "doc-cell";
    doc.appendChild(cell);
  }
  doc.style.gridTemplateRows = "129px 126px 126px 126px";
  for (let i = 0; i < 3; i++) doc.children[i].classList.add("doc-first");
</script>
<script src="https://cdn.jsdelivr.net/npm/bootstrap@5.3.0/dist/js/bootstrap.bundle.min.js"></script>
</body>
</html>
